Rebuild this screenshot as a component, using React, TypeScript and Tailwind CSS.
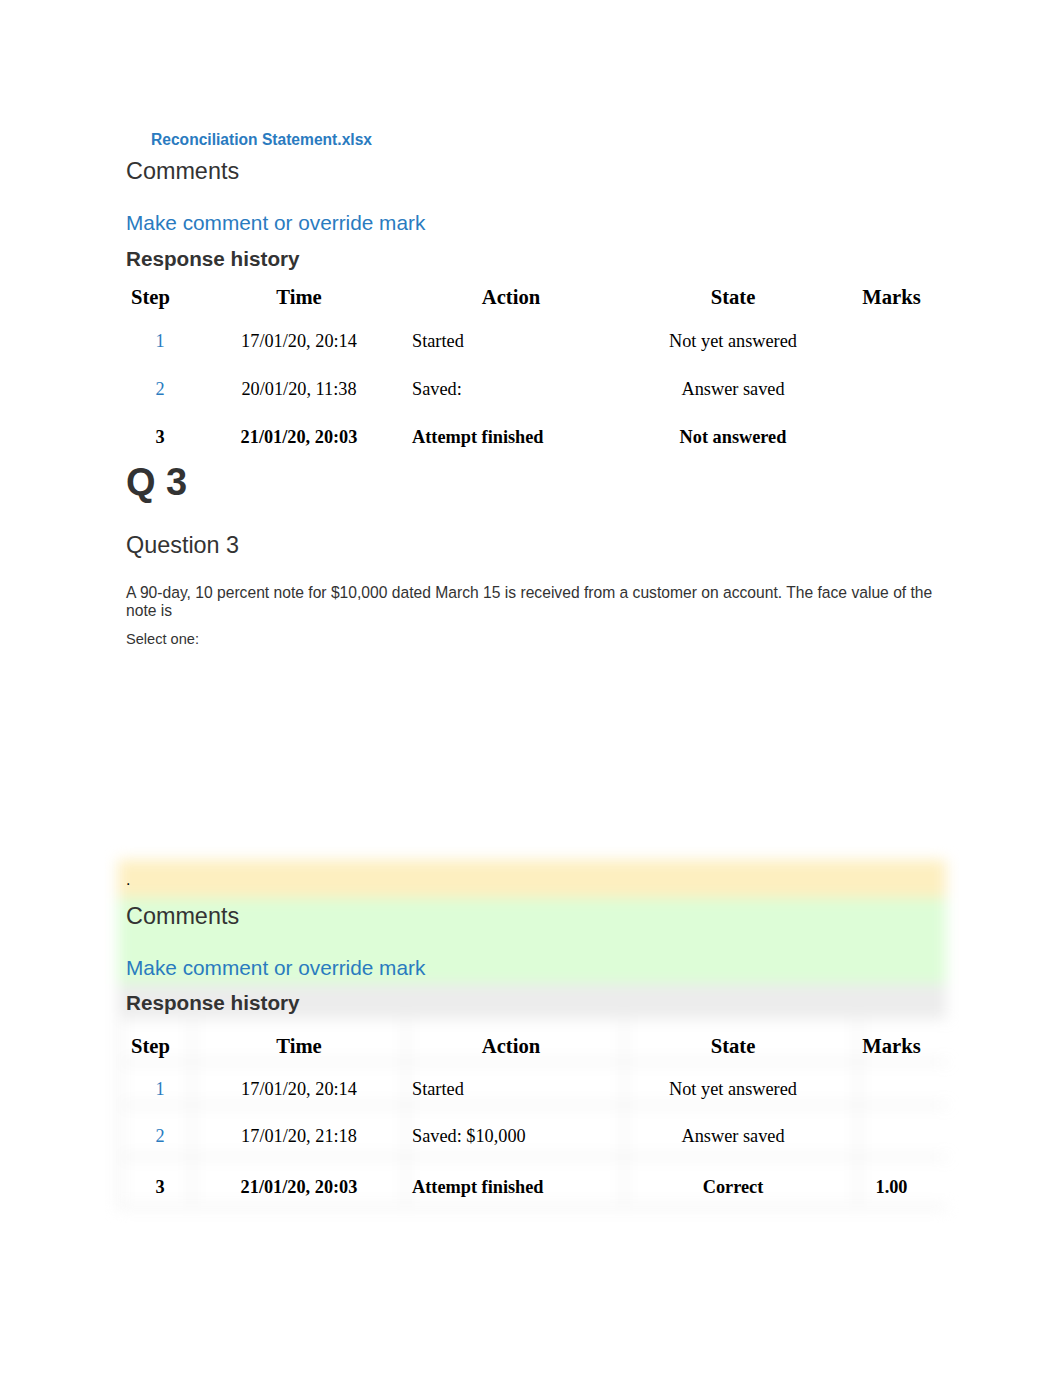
import React from "react";

const sans = { fontFamily: '"Liberation Sans", Arial, sans-serif' };
const serif = { fontFamily: '"Liberation Serif", "Times New Roman", serif' };

type Row = { step: string; time: string; action: string; state: string; marks: string; bold?: boolean; h: number };

function History({ rows, headH }: { rows: Row[]; headH: number }) {
  return (
    <div className="text-black" style={serif}>
      <div className="grid grid-cols-[68px_210px_214px_230px_87px] items-center font-bold text-[20.6px]" style={{ height: headH }}>
        <div className="pl-[5px]">Step</div>
        <div className="text-center">Time</div>
        <div className="text-center">Action</div>
        <div className="text-center">State</div>
        <div className="text-center">Marks</div>
      </div>
      {rows.map((r) => (
        <div
          key={r.step}
          className={`grid grid-cols-[68px_210px_214px_230px_87px] items-center text-[18.3px] ${r.bold ? "font-bold" : ""}`}
          style={{ height: r.h }}
        >
          <div className={`text-center ${r.bold ? "text-black" : "text-[#2a7bbf]"}`}>{r.step}</div>
          <div className="text-center">{r.time}</div>
          <div className="pl-[8px]">{r.action}</div>
          <div className="text-center">{r.state}</div>
          <div className="text-center">{r.marks}</div>
        </div>
      ))}
    </div>
  );
}

export default function App() {
  const rows1: Row[] = [
    { step: "1", time: "17/01/20, 20:14", action: "Started", state: "Not yet answered", marks: "", h: 48 },
    { step: "2", time: "20/01/20, 11:38", action: "Saved:", state: "Answer saved", marks: "", h: 48 },
    { step: "3", time: "21/01/20, 20:03", action: "Attempt finished", state: "Not answered", marks: "", bold: true, h: 48 },
  ];
  const rows2: Row[] = [
    { step: "1", time: "17/01/20, 20:14", action: "Started", state: "Not yet answered", marks: "", h: 43 },
    { step: "2", time: "17/01/20, 21:18", action: "Saved: $10,000", state: "Answer saved", marks: "", h: 52 },
    { step: "3", time: "21/01/20, 20:03", action: "Attempt finished", state: "Correct", marks: "1.00", bold: true, h: 50 },
  ];

  return (
    <div className="min-h-[1376px] w-[1062px] bg-white text-[#333]" style={sans}>
      <div className="pt-[129px] pl-[126px] w-[938px]">
        <div className="ml-[25px] text-[15.6px] leading-[22px] font-bold text-[#2a7bbf]">Reconciliation Statement.xlsx</div>
        <div className="mt-[6px] text-[23.4px] leading-[28px]">Comments</div>
        <div className="mt-[24px] text-[20.8px] leading-[28px] text-[#2a7bbf]">Make comment or override mark</div>
        <div className="mt-[8px] text-[20.7px] leading-[28px] font-bold">Response history</div>
        <div className="mt-[3px]">
          <History rows={rows1} headH={42} />
        </div>

        <div className="text-[38px] leading-[40px] font-bold">Q 3</div>
        <div className="mt-[29px] text-[23.4px] leading-[28px]">Question 3</div>
        <div className="mt-[25px] text-[15.65px] leading-[18px] pr-[2px]">
          A 90-day, 10 percent note for $10,000 dated March 15 is received from a customer on account. The face value of the note is
        </div>
        <div className="mt-[10px] text-[14.6px] leading-[18px]">Select one:</div>

        <div className="relative mt-[212px]">
          <div className="absolute left-[-8px] right-[-8px] top-0 blur-[7px]">
            <div className="h-[38px] bg-[#fdefc0]" />
            <div className="h-[86px] bg-[#ddfdd7]" />
            <div className="h-[32px] bg-[#ececec]" />
            <div className="bg-[#f0f0f0] p-[4px] flex flex-col gap-[4px]">
              {[40, 39, 48, 46].map((h, i) => (
                <div key={i} className="grid grid-cols-[68px_210px_214px_230px_87px] gap-[4px]" style={{ height: h }}>
                  <div className="bg-white" />
                  <div className="bg-white" />
                  <div className="bg-white" />
                  <div className="bg-white" />
                  <div className="bg-white" />
                </div>
              ))}
            </div>
          </div>
          <div className="relative pt-[11px]">
            <div className="text-[16px] leading-[18px] text-black">.</div>
            <div className="mt-[13px] text-[23.4px] leading-[28px]">Comments</div>
            <div className="mt-[24px] text-[20.8px] leading-[28px] text-[#2a7bbf]">Make comment or override mark</div>
            <div className="mt-[7px] text-[20.7px] leading-[28px] font-bold">Response history</div>
            <div className="mt-[7px]">
              <History rows={rows2} headH={44} />
            </div>
          </div>
        </div>
      </div>
    </div>
  );
}
